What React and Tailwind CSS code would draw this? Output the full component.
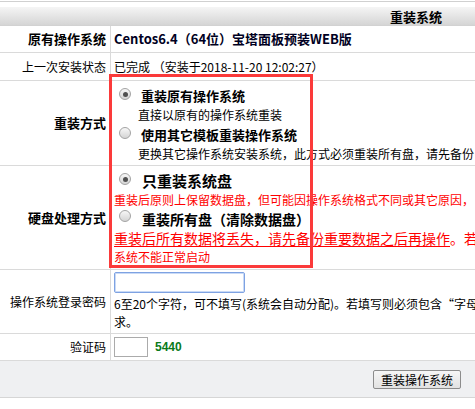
import React from 'react';

const Radio = ({ checked }) => (
  <span className="flex h-[12px] w-[12px] shrink-0 items-center justify-center rounded-full border border-[#a3a3a3] bg-gradient-to-b from-[#f7f7f7] to-[#d4d4d4]">
    {checked && <span className="h-[5px] w-[5px] rounded-full bg-[#505050]" />}
  </span>
);

const Row = ({ label, bold, className = '', children }) => (
  <div className={`flex border-b border-[#dadada] ${className}`}>
    <div
      className={`flex w-[111px] shrink-0 items-center justify-end border-r border-[#dadada] pr-[4px] ${
        bold ? 'text-[13px] font-bold' : 'text-[12px]'
      }`}
    >
      {label}
    </div>
    <div className="min-w-0 flex-1 pl-[3px]">{children}</div>
  </div>
);

export default function App() {
  return (
    <div className="relative h-[409px] w-[475px] overflow-hidden bg-white font-['Noto_Sans_CJK_SC',sans-serif] text-black">
      {/* top frame */}
      <div className="mt-[1px] h-[1px] bg-[#d0d0d0]" />
      <div className="h-[5px]" />

      {/* header */}
      <div className="flex h-[19px] items-center justify-end border-b border-[#d2d2d2] bg-gradient-to-b from-[#f5f5f5] to-[#d5d5d5] pr-[33px] text-[13px] font-bold leading-none">
        重装系统
      </div>

      <Row label="原有操作系统" bold className="h-[27px]">
        <div className="flex h-full items-center text-[13px] font-bold text-[#000022]">
          Centos6.4（64位）宝塔面板预装WEB版
        </div>
      </Row>

      <Row label="上一次安装状态" className="h-[28px]">
        <div className="flex h-full items-center whitespace-nowrap text-[12px]">
          已完成 （安装于2018-11-20 12:02:27）
        </div>
      </Row>

      <Row label="重装方式" bold className="h-[85px]">
        <div className="whitespace-nowrap pt-[5px]">
          <div className="flex h-[20px] items-start">
            <span className="ml-[5px] mt-[2px]">
              <Radio checked />
            </span>
            <span className="ml-[10px] text-[13px] font-bold leading-[20px]">重装原有操作系统</span>
          </div>
          <div className="pl-[24px] text-[12px] leading-[18px]">直接以原有的操作系统重装</div>
          <div className="mt-[1px] flex h-[20px] items-start">
            <span className="ml-[5px] mt-[2px]">
              <Radio />
            </span>
            <span className="ml-[10px] text-[13px] font-bold leading-[20px]">使用其它模板重装操作系统</span>
          </div>
          <div className="pl-[24px] text-[12px] leading-[18px]">
            更换其它操作系统安装系统，此方式必须重装所有盘，请先备份
          </div>
        </div>
      </Row>

      <Row label="硬盘处理方式" bold className="h-[104px]">
        <div className="whitespace-nowrap pt-[5px]">
          <div className="flex h-[20px] items-start">
            <span className="ml-[5px] mt-[2px]">
              <Radio checked />
            </span>
            <span className="ml-[11px] text-[15px] font-bold leading-[20px]">只重装系统盘</span>
          </div>
          <div className="text-[12px] leading-[18px] text-[#ff0000]">
            重装后原则上保留数据盘，但可能因操作系统格式不同或其它原因，
          </div>
          <div className="flex h-[20px] items-start">
            <span className="ml-[5px] mt-[1px]">
              <Radio />
            </span>
            <span className="ml-[11px] text-[14px] font-bold leading-[20px]">重装所有盘（清除数据盘）</span>
          </div>
          <div className="text-[14px] leading-[18px] text-[#ff0000]">
            <span className="underline underline-offset-2">重装后所有数据将丢失，请先备份重要数据之后再操作</span>。若
          </div>
          <div className="text-[12px] leading-[20px] text-[#ff0000]">系统不能正常启动</div>
        </div>
      </Row>

      <Row label="操作系统登录密码" className="h-[64px]">
        <div className="whitespace-nowrap pt-[2px]">
          <div className="h-[21px] w-[131px] rounded-[2px] border border-[#7ea2e2] shadow-[inset_0_0_0_1px_#c9daf6]" />
          <div className="mt-[2px] text-[12px] leading-[18px]">
            6至20个字符，可不填写(系统会自动分配)。若填写则必须包含“字母
          </div>
          <div className="text-[12px] leading-[18px]">求。</div>
        </div>
      </Row>

      <Row label="验证码" className="h-[27px]">
        <div className="flex h-full items-center">
          <div className="h-[20px] w-[34px] border border-[#ababab]" />
          <span className="ml-[7px] font-['Liberation_Sans',sans-serif] text-[12px] font-bold text-[#0a7a1a]">5440</span>
        </div>
      </Row>

      {/* footer */}
      <div className="flex h-[37px] justify-end border-b border-[#d6d6d6] bg-[#eff0f2] pr-[14px] pt-[9px]">
        <button className="h-[19px] w-[88px] rounded-[2px] border border-[#8c8c8c] bg-gradient-to-b from-[#f6f6f6] to-[#e2e2e2] text-[12px] leading-none">
          重装操作系统
        </button>
      </div>

      {/* red annotation box */}
      <div className="pointer-events-none absolute left-[109px] top-[74px] h-[194px] w-[204px] border-[3px] border-[#fb3a3a]" />
    </div>
  );
}
